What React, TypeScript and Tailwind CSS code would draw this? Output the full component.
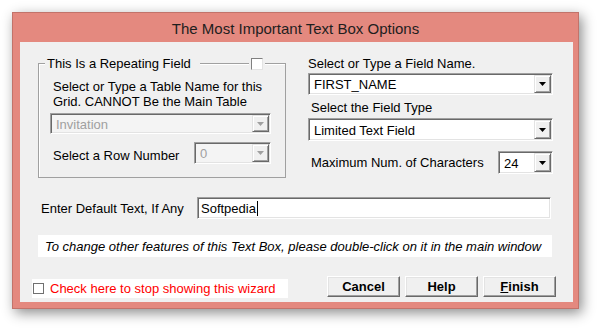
import React from 'react';

// Small down-arrow used on the combo buttons
function Arrow({ disabled }: { disabled?: boolean }) {
  return (
    <svg width="7" height="4" viewBox="0 0 7 4">
      <polygon points="0,0 7,0 3.5,4" fill={disabled ? '#a0a0a0' : '#000'} />
    </svg>
  );
}

interface ComboProps {
  value: string;
  width: string;
  height?: string;
  disabled?: boolean;
}

// Classic sunken combo box with a raised drop button
function Combo({ value, width, height = 'h-[22px]', disabled }: ComboProps) {
  return (
    <div
      className={`${width} ${height} flex border border-t-[#a0a0a0] border-l-[#a0a0a0] border-r-white border-b-white shadow-[inset_1px_1px_0_#696969,inset_-1px_-1px_0_#e3e3e3] ${
        disabled ? 'bg-[#f4f4f4]' : 'bg-white'
      }`}
    >
      <div
        className={`flex-1 flex items-center pl-[5px] pt-[1px] whitespace-nowrap ${disabled ? 'text-[#a0a0a0]' : 'text-black'}`}
      >
        {value}
      </div>
      <div className="w-[17px] my-[1px] mr-[1px] flex items-center justify-center bg-[#f0f0f0] border border-t-[#e3e3e3] border-l-[#e3e3e3] border-r-[#696969] border-b-[#696969] shadow-[inset_1px_1px_0_#fff,inset_-1px_-1px_0_#a0a0a0]">
        <Arrow disabled={disabled} />
      </div>
    </div>
  );
}

function Button({ children }: { children: React.ReactNode }) {
  return (
    <button className="w-[73px] h-[21px] flex items-center justify-center bg-[#f0f0f0] font-bold text-black border border-t-white border-l-white border-r-[#696969] border-b-[#696969] shadow-[inset_-1px_-1px_0_#a0a0a0,inset_1px_1px_0_#e3e3e3]">
      {children}
    </button>
  );
}

export default function App() {
  return (
    <div className="w-[600px] h-[330px] bg-white pt-[12px] pl-[12px] font-['Liberation_Sans',Arial,sans-serif] text-[13px] leading-[15px] whitespace-nowrap">
      <div className="w-[567px] h-[297px] flex flex-col bg-[#e4897f] border border-[#c2736a] shadow-[3px_4px_12px_rgba(0,0,0,0.45)]">
        {/* Title bar */}
        <div className="h-[29px] flex items-center justify-center text-[15px] text-[#1e1e1e] pt-[2px]">
          The Most Important Text Box Options
        </div>

        {/* Client area */}
        <div className="ml-[7px] mr-[5px] mb-[6px] flex-1 bg-[#f0f0f0] flex flex-col">
          <div className="flex items-start">
            {/* Group box */}
            <div className="relative ml-[18px] mt-[21px] w-[248px] h-[115px] border border-[#a0a0a0] shadow-[inset_1px_1px_0_#fff] px-[11px] pt-[15px]">
              <span className="absolute left-[6px] -top-[8px] bg-[#f0f0f0] pl-[2px] pr-[9px] text-black">
                This Is a Repeating Field
              </span>
              <span className="absolute left-[210px] -top-[6px] bg-[#f0f0f0] px-[2px]">
                <span className="block w-[12px] h-[12px] bg-white border border-t-[#808080] border-l-[#808080] border-r-[#e3e3e3] border-b-[#e3e3e3]" />
              </span>
              <div className="pl-[3px] text-black">
                <div>Select or Type a Table Name for this</div>
                <div>Grid. CANNOT Be the Main Table</div>
              </div>
              <div className="mt-[4px]">
                <Combo value="Invitation" width="w-[221px]" height="h-[21px]" disabled />
              </div>
              <div className="mt-[8px] flex items-start">
                <div className="w-[144px] pl-[3px] mt-[6px] text-black">Select a Row Number</div>
                <Combo value="0" width="w-[77px]" disabled />
              </div>
            </div>

            {/* Right column */}
            <div className="ml-[22px] w-[245px] pt-[14px] flex flex-col text-black">
              <div>Select or Type a Field Name.</div>
              <div className="mt-[2px]">
                <Combo value="FIRST_NAME" width="w-[245px]" />
              </div>
              <div className="mt-[5px] pl-[3px]">Select the Field Type</div>
              <div className="mt-[3px]">
                <Combo value="Limited Text Field" width="w-[245px]" height="h-[23px]" />
              </div>
              <div className="mt-[10px] flex items-center justify-between">
                <div className="pl-[3px]">Maximum Num. of Characters</div>
                <Combo value="24" width="w-[55px]" height="h-[23px]" />
              </div>
            </div>
          </div>

          {/* Default text row */}
          <div className="mt-[19px] flex items-center">
            <div className="w-[177px] pl-[21px] text-black">Enter Default Text, If Any</div>
            <div className="w-[354px] h-[22px] flex items-center pl-[3px] bg-white border border-t-[#a0a0a0] border-l-[#a0a0a0] border-r-white border-b-white shadow-[inset_1px_1px_0_#696969,inset_-1px_-1px_0_#e3e3e3] text-black">
              <span className="border-r border-black pr-[1px]">Softpedia</span>
            </div>
          </div>

          {/* Info strip */}
          <div className="mt-[16px] ml-[18px] w-[514px] h-[22px] bg-white flex items-center pl-[7px] italic text-black">
            To change other features of this Text Box, please double-click on it in the main window
          </div>

          {/* Bottom row */}
          <div className="mt-[19px] flex items-end">
            <div className="ml-[12px] w-[256px] h-[19px] bg-white flex items-center">
              <span className="ml-[1px] w-[11px] h-[11px] bg-white border border-[#707070]" />
              <span className="ml-[6px] text-[#ff0000]">Check here to stop showing this wizard</span>
            </div>
            <div className="ml-[39px] flex gap-[5px] mb-[1px]">
              <Button>Cancel</Button>
              <Button>Help</Button>
              <Button>
                <span>
                  <span className="underline">F</span>inish
                </span>
              </Button>
            </div>
          </div>
        </div>
      </div>
    </div>
  );
}
